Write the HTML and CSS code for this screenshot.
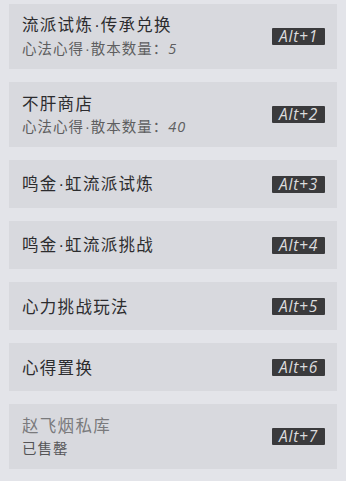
FILE: index.html
```html
<!DOCTYPE html>
<html lang="zh">
<head>
<meta charset="utf-8">
<link rel="stylesheet" href="styles.css">
</head>
<body>
<div class="list">
  <div class="card tall">
    <div class="text">
      <div class="title">流派试炼<span class="dot">·</span>传承兑换</div>
      <div class="sub">心法心得<span class="dot">·</span>散本数量：<span class="num">5</span></div>
    </div>
    <span class="key">Alt+1</span>
  </div>
  <div class="card tall">
    <div class="text">
      <div class="title">不肝商店</div>
      <div class="sub">心法心得<span class="dot">·</span>散本数量：<span class="num">40</span></div>
    </div>
    <span class="key">Alt+2</span>
  </div>
  <div class="card">
    <div class="text"><div class="title">鸣金<span class="dot">·</span>虹流派试炼</div></div>
    <span class="key">Alt+3</span>
  </div>
  <div class="card">
    <div class="text"><div class="title">鸣金<span class="dot">·</span>虹流派挑战</div></div>
    <span class="key">Alt+4</span>
  </div>
  <div class="card">
    <div class="text"><div class="title">心力挑战玩法</div></div>
    <span class="key">Alt+5</span>
  </div>
  <div class="card">
    <div class="text"><div class="title">心得置换</div></div>
    <span class="key">Alt+6</span>
  </div>
  <div class="card tall disabled">
    <div class="text">
      <div class="title">赵飞烟私库</div>
      <div class="sub">已售罄</div>
    </div>
    <span class="key">Alt+7</span>
  </div>
</div>
</body>
</html>
```
FILE: styles.css
```css
html, body {
  margin: 0;
  padding: 0;
  background: #e3e4e9;
}
body {
  width: 346px;
  height: 481px;
  overflow: hidden;
  font-family: "Noto Sans CJK SC", "Noto Sans", sans-serif;
}
.list {
  display: flex;
  flex-direction: column;
  gap: 13px;
  padding: 4px 9px 0 9px;
}
.card {
  display: flex;
  align-items: center;
  justify-content: space-between;
  height: 48px;
  background: #d8d9de;
  padding: 0 12px 0 13px;
  box-sizing: border-box;
}
.card.tall {
  height: 65px;
}
.text {
  display: flex;
  flex-direction: column;
}
.title {
  font-size: 16.5px;
  line-height: 23px;
  color: #2c2c2e;
  letter-spacing: 1.3px;
}
.sub {
  font-size: 14.5px;
  line-height: 22px;
  color: #5e5e60;
  letter-spacing: 1px;
}
.dot {
  font-family: "Liberation Sans", sans-serif;
  letter-spacing: 0;
  margin: 0 1px;
}
.num {
  font-family: "Open Sans", "Liberation Sans", sans-serif;
  font-style: italic;
  letter-spacing: 1px;
}
.disabled .title {
  color: #7a7a7c;
}
.disabled .sub {
  color: #555557;
}
.key {
  display: inline-block;
  width: 53px;
  height: 17px;
  background: #3a3a3c;
  color: #dcdcde;
  font-family: "Open Sans", "Liberation Sans", sans-serif;
  font-style: italic;
  font-size: 15.5px;
  line-height: 17px;
  text-align: center;
  letter-spacing: 0.8px;
  box-sizing: border-box;
  border-radius: 1px;
  white-space: nowrap;
}
```
